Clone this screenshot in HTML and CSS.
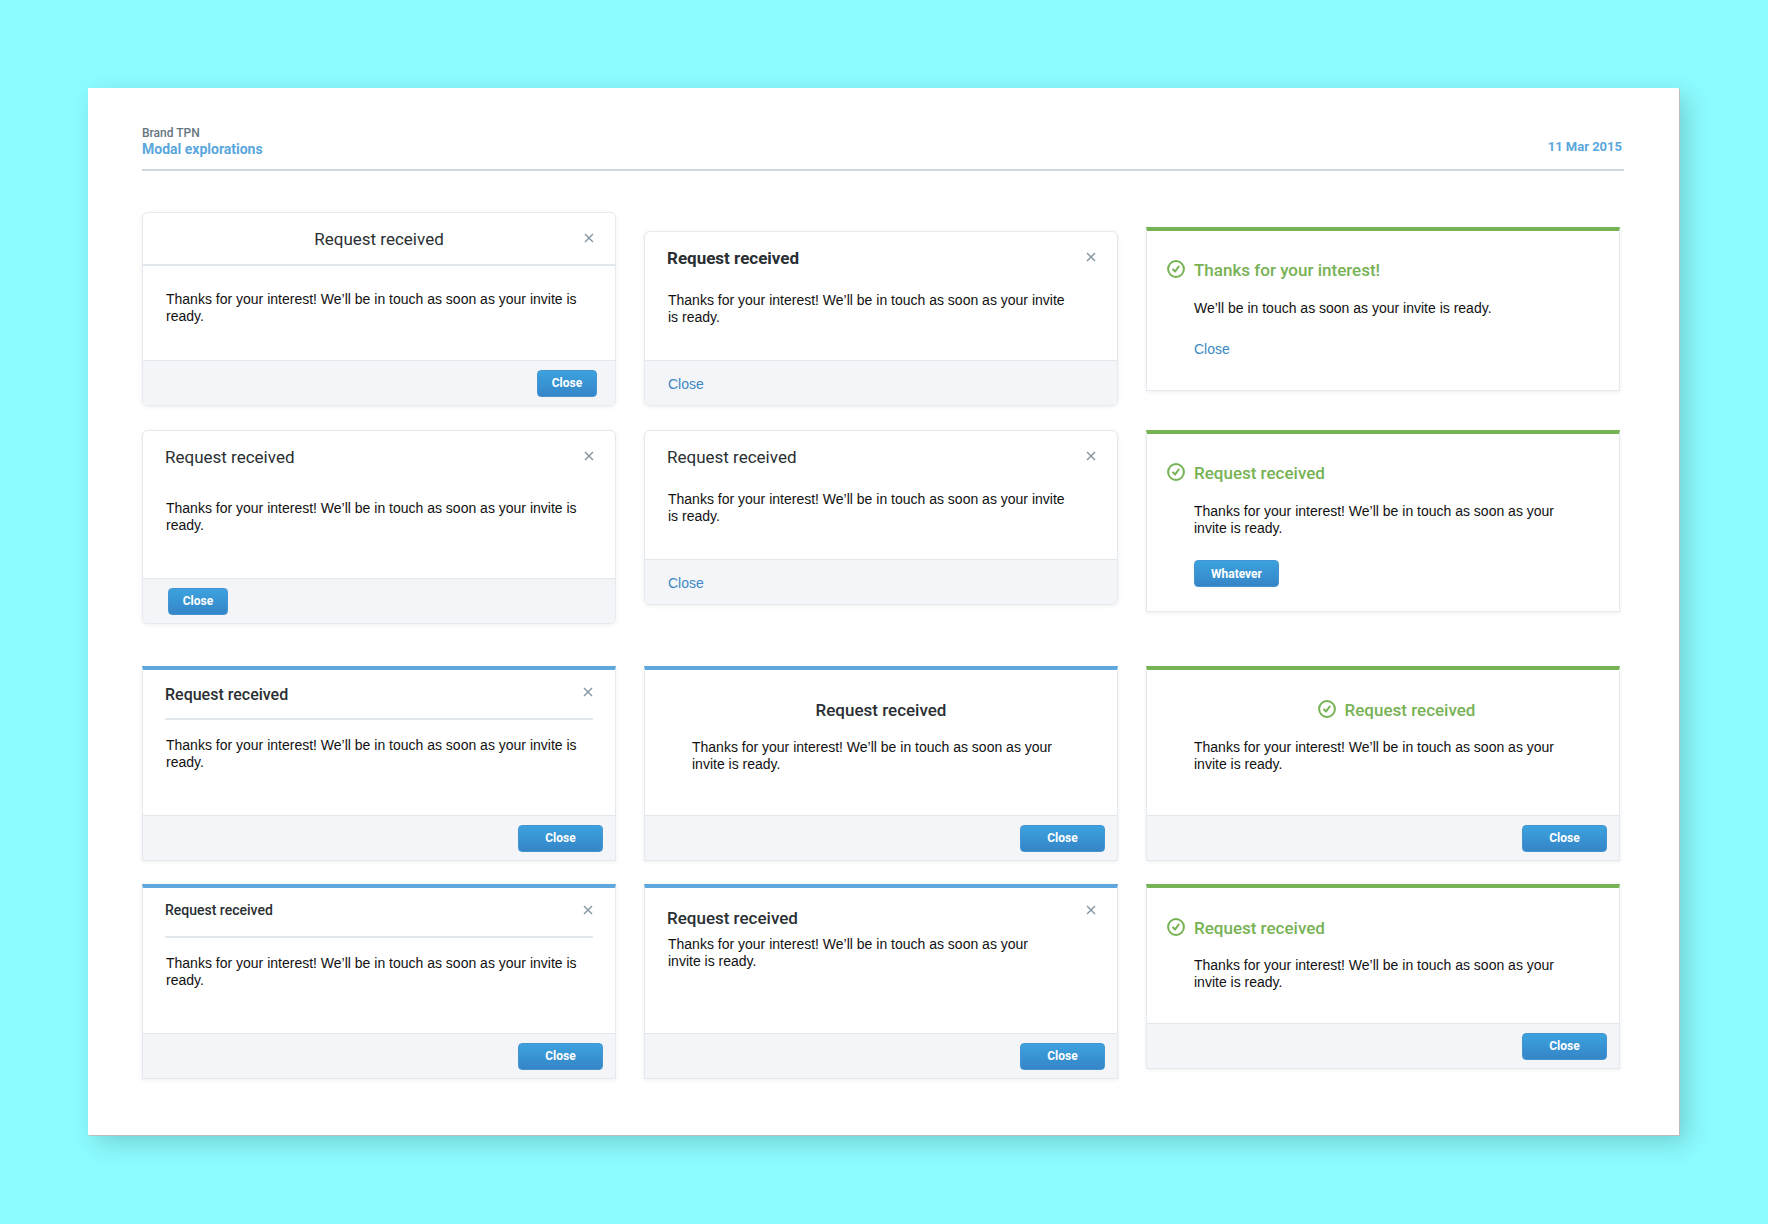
FILE: index.html
```html
<!DOCTYPE html>
<html lang="en">
<head>
<meta charset="utf-8">
<meta name="viewport" content="width=device-width, initial-scale=1">
<title>Modal explorations</title>
<link rel="stylesheet" href="styles.css">
</head>
<body>
<svg class="sprite" aria-hidden="true">
  <symbol id="cross" viewBox="0 0 10 10"><path d="M1 1l8 8M9 1l-8 8" fill="none" stroke="currentColor" stroke-width="1.5"/></symbol>
  <symbol id="check" viewBox="0 0 18 18"><circle cx="9" cy="9" r="7.9" fill="none" stroke="currentColor" stroke-width="2"/><path d="M6.1 9.5l2 2 3.6-5" fill="none" stroke="currentColor" stroke-width="2.1" stroke-linecap="round" stroke-linejoin="round"/></symbol>
</svg>
<div class="sheet">
  <header class="sheet-head">
    <div>
      <p class="brand">Brand TPN</p>
      <h1 class="sheet-title">Modal explorations</h1>
    </div>
    <time class="date" datetime="2015-03-11">11 Mar 2015</time>
  </header>

  <main>
    <div class="modals">
      <section class="modal rounded titled">
        <header class="head">
          <h2 class="title">Request received</h2>
          <button class="dismiss" type="button" aria-label="Dismiss"><svg><use href="#cross"/></svg></button>
        </header>
        <p class="text">Thanks for your interest! We’ll be in touch as soon as your invite is ready.</p>
        <footer class="foot foot-end foot-inset"><button class="btn" type="button">Close</button></footer>
      </section>

      <section class="modal rounded low">
        <header class="head">
          <h2 class="title strong">Request received</h2>
          <button class="dismiss" type="button" aria-label="Dismiss"><svg><use href="#cross"/></svg></button>
        </header>
        <p class="text medium">Thanks for your interest! We’ll be in touch as soon as your invite is ready.</p>
        <footer class="foot"><a class="link" href="#">Close</a></footer>
      </section>

      <section class="modal success plain lowered">
        <h2 class="title"><svg class="check"><use href="#check"/></svg>Thanks for your interest!</h2>
        <p class="text">We’ll be in touch as soon as your invite is ready.</p>
        <p class="action"><a class="link" href="#">Close</a></p>
      </section>

      <section class="modal rounded airy">
        <header class="head">
          <h2 class="title">Request received</h2>
          <button class="dismiss" type="button" aria-label="Dismiss"><svg><use href="#cross"/></svg></button>
        </header>
        <p class="text">Thanks for your interest! We’ll be in touch as soon as your invite is ready.</p>
        <footer class="foot"><button class="btn" type="button">Close</button></footer>
      </section>

      <section class="modal rounded">
        <header class="head">
          <h2 class="title">Request received</h2>
          <button class="dismiss" type="button" aria-label="Dismiss"><svg><use href="#cross"/></svg></button>
        </header>
        <p class="text medium">Thanks for your interest! We’ll be in touch as soon as your invite is ready.</p>
        <footer class="foot"><a class="link" href="#">Close</a></footer>
      </section>

      <section class="modal success plain">
        <h2 class="title"><svg class="check"><use href="#check"/></svg>Request received</h2>
        <p class="text">Thanks for your interest! We’ll be in touch as soon as your invite is ready.</p>
        <p class="action"><button class="btn wide" type="button">Whatever</button></p>
      </section>
    </div>

    <div class="modals">
      <section class="modal info ruled">
        <header class="head">
          <h2 class="title">Request received</h2>
          <button class="dismiss" type="button" aria-label="Dismiss"><svg><use href="#cross"/></svg></button>
        </header>
        <p class="text">Thanks for your interest! We’ll be in touch as soon as your invite is ready.</p>
        <footer class="foot foot-end"><button class="btn wide" type="button">Close</button></footer>
      </section>

      <section class="modal info centered">
        <h2 class="title">Request received</h2>
        <p class="text">Thanks for your interest! We’ll be in touch as soon as your invite is ready.</p>
        <footer class="foot foot-end"><button class="btn wide" type="button">Close</button></footer>
      </section>

      <section class="modal success centered">
        <h2 class="title"><svg class="check"><use href="#check"/></svg>Request received</h2>
        <p class="text">Thanks for your interest! We’ll be in touch as soon as your invite is ready.</p>
        <footer class="foot foot-end"><button class="btn wide" type="button">Close</button></footer>
      </section>

      <section class="modal info ruled small">
        <header class="head">
          <h2 class="title">Request received</h2>
          <button class="dismiss" type="button" aria-label="Dismiss"><svg><use href="#cross"/></svg></button>
        </header>
        <p class="text">Thanks for your interest! We’ll be in touch as soon as your invite is ready.</p>
        <footer class="foot foot-end"><button class="btn wide" type="button">Close</button></footer>
      </section>

      <section class="modal info tight">
        <header class="head">
          <h2 class="title">Request received</h2>
          <button class="dismiss" type="button" aria-label="Dismiss"><svg><use href="#cross"/></svg></button>
        </header>
        <p class="text narrow">Thanks for your interest! We’ll be in touch as soon as your invite is ready.</p>
        <footer class="foot foot-end"><button class="btn wide" type="button">Close</button></footer>
      </section>

      <section class="modal success">
        <h2 class="title"><svg class="check"><use href="#check"/></svg>Request received</h2>
        <p class="text">Thanks for your interest! We’ll be in touch as soon as your invite is ready.</p>
        <footer class="foot foot-end"><button class="btn wide" type="button">Close</button></footer>
      </section>
    </div>
  </main>
</div>
</body>
</html>
```
FILE: styles.css
```css
* { box-sizing: border-box; }

body {
  margin: 0;
  padding: 88px 89px 89px 88px;
  background: #8cfcff;
  color: #111;
  font: 14px/17px "Liberation Sans", Arial, sans-serif;
}

h1, h2, p { margin: 0; }

.sprite { display: none; }

.sheet {
  padding: 37px 55px 56px 54px;
  background: #fff;
  box-shadow: 1px 1px 0 #bdbdbd, 8px 8px 24px rgba(0, 0, 0, .18);
}

/* Sheet heading */
.sheet-head {
  display: flex;
  justify-content: space-between;
  align-items: flex-end;
  padding-bottom: 12px;
  border-bottom: 2px solid #ccd9e2;
  margin-bottom: 41px;
  font-family: Roboto, sans-serif;
}
.brand { color: #66757f; font-size: 12px; line-height: 16px; font-weight: 500; }
.sheet-title, .date { color: #5aa7dd; font-size: 14px; line-height: 16px; font-weight: 700; }
.date { padding: 0 2px 2px 0; font-size: 13px; }

/* Grid of modals */
.modals {
  display: grid;
  grid-template-columns: repeat(auto-fit, minmax(400px, 1fr));
  align-items: start;
  gap: 24px 28px;
  margin-right: 4px;
}
.modals + .modals { margin-top: 42px; row-gap: 23px; }

.modal {
  border: 1px solid #e4eaef;
  background: #fff;
  box-shadow: 0 1px 4px rgba(41, 47, 51, .08);
}
.low { align-self: end; }
.lowered { margin-top: 15px; }

.head { display: flex; align-items: flex-start; padding: 16px 21px 0 22px; }
.title {
  flex: 1;
  color: #292f33;
  font: 400 17px/20px Roboto, sans-serif;
}
.strong { font-weight: 700; }
.dismiss {
  display: flex;
  align-items: center;
  height: 17px;
  padding: 0;
  border: 0;
  background: none;
  color: #8899a6;
  cursor: pointer;
}
.dismiss svg { width: 10px; height: 10px; }

.text { padding: 24px 21px 34px 23px; }

.foot {
  display: flex;
  align-items: center;
  height: 45px;
  padding: 0 23px;
  border-top: 1px solid #e1e8ed;
  background: #f3f5f9;
}
.foot-end { justify-content: flex-end; padding: 0 12px; }
.foot-inset { padding: 0 18px; }

.link { color: #3b88c3; text-decoration: none; }
.foot .link { padding-top: 2px; }

.btn {
  height: 27px;
  min-width: 60px;
  padding: 0 12px;
  border: 1px solid #4495d2;
  border-radius: 4px;
  background: linear-gradient(#3ca2de, #3585c7);
  color: #fff;
  font: 700 12px/16px Roboto, sans-serif;
  cursor: pointer;
}
.wide { min-width: 85px; }

/* Rounded modals */
.rounded { border-radius: 6px; }
.rounded .foot { border-radius: 0 0 5px 5px; }
.medium { padding-right: 40px; }

.titled .head { height: 53px; padding: 16px 21px 0 31px; border-bottom: 2px solid #e1e8ed; }
.titled .title { text-align: center; }
.titled .text { padding: 25px 21px 35px 23px; }

.airy .text { padding: 33px 21px 44px 23px; }
.airy .foot { padding: 0 25px; }

/* Square modals with a coloured top edge */
.info { border-top: 4px solid #5ea8de; }
.success { border-top: 4px solid #77b255; }
.info .title, .success .title { font-weight: 500; }
.info .head { padding-top: 13px; }

.ruled .head { height: 50px; margin: 0 22px; padding: 13px 0 0; border-bottom: 2px solid #e1e8ed; }
.ruled .title { padding-top: 2px; font-size: 16px; }
.ruled .text { padding: 17px 21px 44px 23px; }
.ruled.small .title { padding-top: 0; font-size: 14px; line-height: 18px; }

.tight .title { padding-top: 7px; }
.narrow { padding: 8px 72px 63px 23px; }

.success .title { display: flex; gap: 9px; padding: 30px 20px 0; color: #77b255; }
.check { width: 18px; height: 18px; }
.success .text { padding: 19px 47px 32px; }

.centered .title { padding: 30px 20px 0; text-align: center; }
.success.centered .title { justify-content: center; padding-left: 47px; }
.centered .text, .success.centered .text { padding: 19px 47px 42px; }

.success.plain .title { padding-top: 29px; }
.success.plain .text { padding: 20px 47px 24px; }
.action { padding: 0 47px 32px; }
.action .btn { display: block; margin: -1px 0 -8px; }
```
